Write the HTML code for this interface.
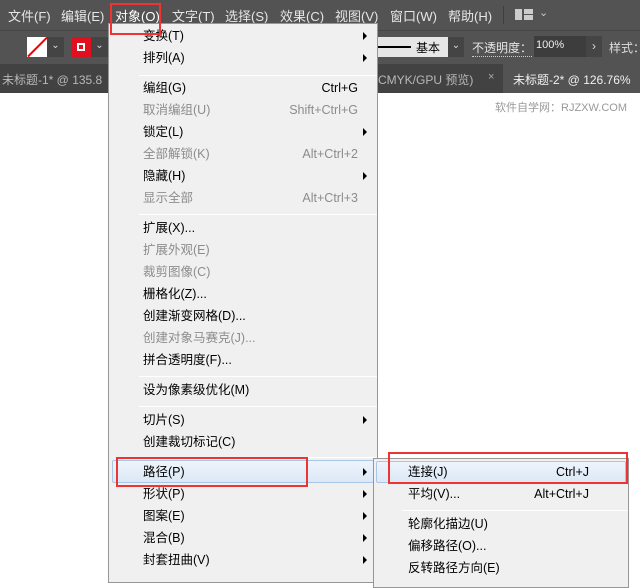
<!DOCTYPE html><html><head><meta charset="utf-8"><style>
*{margin:0;padding:0;box-sizing:border-box}
body{width:640px;height:575px;overflow:hidden;background:#fff;position:relative;font-family:"Liberation Sans","Noto Sans CJK SC",sans-serif;font-size:12px}
.a{position:absolute;white-space:nowrap}
.mb{left:0;top:0;width:640px;height:30px;background:#535353}
.tb{left:0;top:30px;width:640px;height:34px;background:#535353;border-top:1px solid #464646}
.tabs{left:0;top:64px;width:640px;height:29px;background:#424242}
.mt{color:#e6e6e6;font-size:13px;top:6px}
.menu{left:108px;top:23px;width:270px;height:560px;background:#f0f0f0;border:1px solid #979797}
.sub{left:373px;top:458px;width:256px;height:130px;background:#f0f0f0;border:1px solid #979797}
.it{font-size:12.5px;color:#000;line-height:18px;height:18px}
.d{color:#8c8c8c}
.sep{height:1px;background:#d7d7d7;border-bottom:1px solid #fff}
.arr{width:0;height:0;border-left:4px solid #000;border-top:4px solid transparent;border-bottom:4px solid transparent}
.red{border:2px solid #ee3333}
.hl{background:linear-gradient(#eef4fb,#dce8f6);border:1px solid #a9c6e8;border-radius:2px}
</style></head><body>
<div class="a mb"></div>
<div class="a mt" style="left:8px">文件(F)</div>
<div class="a mt" style="left:61px">编辑(E)</div>
<div class="a mt" style="left:115px;color:#fff">对象(O)</div>
<div class="a mt" style="left:172px">文字(T)</div>
<div class="a mt" style="left:225px">选择(S)</div>
<div class="a mt" style="left:280px">效果(C)</div>
<div class="a mt" style="left:335px">视图(V)</div>
<div class="a mt" style="left:390px">窗口(W)</div>
<div class="a mt" style="left:448px">帮助(H)</div>
<div class="a" style="left:503px;top:6px;width:1px;height:18px;background:#3e3e3e"></div>
<div class="a" style="left:515px;top:9px;width:7px;height:11px;background:#ccc"></div>
<div class="a" style="left:524px;top:9px;width:9px;height:5px;background:#ccc"></div>
<div class="a" style="left:524px;top:15px;width:9px;height:5px;background:#ccc"></div>
<div class="a" style="left:539px;top:6px;color:#ccc;font-size:11px">⌄</div>
<div class="a tb"></div>
<div class="a" style="left:27px;top:37px;width:20px;height:20px;background:#fff;overflow:hidden"><div style="position:absolute;left:-3px;top:9px;width:27px;height:2px;background:#e00;transform:rotate(-45deg)"></div></div>
<div class="a" style="left:47px;top:37px;width:17px;height:20px;background:#444;color:#ddd;font-size:10px;text-align:center;line-height:18px">⌄</div>
<div class="a" style="left:71px;top:37px;width:20px;height:20px;background:#e01020"><div style="position:absolute;left:6px;top:6px;width:8px;height:8px;border:2px solid #fff;background:#e01020"></div></div>
<div class="a" style="left:91px;top:37px;width:17px;height:20px;background:#444;color:#ddd;font-size:10px;text-align:center;line-height:18px">⌄</div>
<div class="a" style="left:378px;top:37px;width:70px;height:20px;background:#e6e6e6"><div style="position:absolute;left:0;top:9px;width:33px;height:2px;background:#000"></div><span style="position:absolute;left:38px;top:2px;font-size:12px">基本</span></div>
<div class="a" style="left:448px;top:37px;width:16px;height:20px;background:#444;color:#ddd;font-size:10px;text-align:center;line-height:18px">⌄</div>
<div class="a" style="left:472px;top:39px;color:#e6e6e6;font-size:12px;border-bottom:1px dotted #ccc">不透明度：</div>
<div class="a" style="left:534px;top:36px;width:52px;height:21px;background:#3d3d3d;color:#eee;font-size:11px;padding:3px 2px">100%</div>
<div class="a" style="left:586px;top:36px;width:16px;height:21px;background:#454545;color:#ddd;text-align:center;line-height:20px">›</div>
<div class="a" style="left:609px;top:39px;color:#ddd;font-size:12px">样式：</div>
<div class="a tabs"></div>
<div class="a" style="left:2px;top:71px;color:#b8b8b8;font-size:12px">未标题-1* @ 135.8</div>
<div class="a" style="left:378px;top:71px;color:#b8b8b8;font-size:12px">CMYK/GPU 预览)</div>
<div class="a" style="left:488px;top:71px;color:#aaa;font-size:11px">×</div>
<div class="a" style="left:503px;top:64px;width:137px;height:29px;background:#535353"></div>
<div class="a" style="left:513px;top:71px;color:#f0f0f0;font-size:12px">未标题-2* @ 126.76%</div>
<div class="a" style="left:495px;top:99px;color:#999;font-size:11px">软件自学网：RJZXW.COM</div>

<div class="a menu"></div>
<div class="a hl" style="left:112px;top:460px;width:262px;height:23px"></div>
<div class="a sub"></div>
<div class="a hl" style="left:376px;top:461px;width:250px;height:22px"></div>
<div id="m"></div>

<div class="a red" style="left:110px;top:3px;width:51px;height:32px"></div>
<div class="a red" style="left:116px;top:457px;width:192px;height:30px"></div>
<div class="a red" style="left:388px;top:452px;width:240px;height:32px"></div>
<script>
var items=[["变换(T)",36,0,">"],["排列(A)",58,0,">"],["-",75],["编组(G)",88,0,"Ctrl+G"],["取消编组(U)",110,1,"Shift+Ctrl+G"],["锁定(L)",132,0,">"],["全部解锁(K)",154,1,"Alt+Ctrl+2"],["隐藏(H)",176,0,">"],["显示全部",198,1,"Alt+Ctrl+3"],["-",214],["扩展(X)...",228,0],["扩展外观(E)",250,1],["裁剪图像(C)",272,1],["栅格化(Z)...",294,0],["创建渐变网格(D)...",316,0],["创建对象马赛克(J)...",338,1],["拼合透明度(F)...",360,0],["-",376],["设为像素级优化(M)",390,0],["-",406],["切片(S)",420,0,">"],["创建裁切标记(C)",442,0],["-",457],["路径(P)",472,0,">"],["形状(P)",494,0,">"],["图案(E)",516,0,">"],["混合(B)",538,0,">"],["封套扭曲(V)",560,0,">"]];
var sub=[["连接(J)",472,"Ctrl+J"],["平均(V)...",494,"Alt+Ctrl+J"],["-",510],["轮廓化描边(U)",524],["偏移路径(O)...",546],["反转路径方向(E)",568]];
var h="";
items.forEach(function(t){if(t[0]=="-"){h+='<div class="a sep" style="left:139px;top:'+t[1]+'px;width:238px"></div>';return;}
var c=t[2]?"it d":"it";h+='<div class="a '+c+'" style="left:143px;top:'+(t[1]-9)+'px">'+t[0]+'</div>';
if(t[3]==">")h+='<div class="a arr" style="left:363px;top:'+(t[1]-4)+'px"></div>';else if(t[3])h+='<div class="a '+c+'" style="right:282px;top:'+(t[1]-9)+'px">'+t[3]+'</div>';});
sub.forEach(function(t){if(t[0]=="-"){h+='<div class="a sep" style="left:402px;top:'+t[1]+'px;width:226px"></div>';return;}
h+='<div class="a it" style="left:408px;top:'+(t[1]-9)+'px">'+t[0]+'</div>';if(t[2])h+='<div class="a it" style="right:51px;top:'+(t[1]-9)+'px">'+t[2]+'</div>';});
document.getElementById("m").outerHTML=h;
</script>
</body></html>
